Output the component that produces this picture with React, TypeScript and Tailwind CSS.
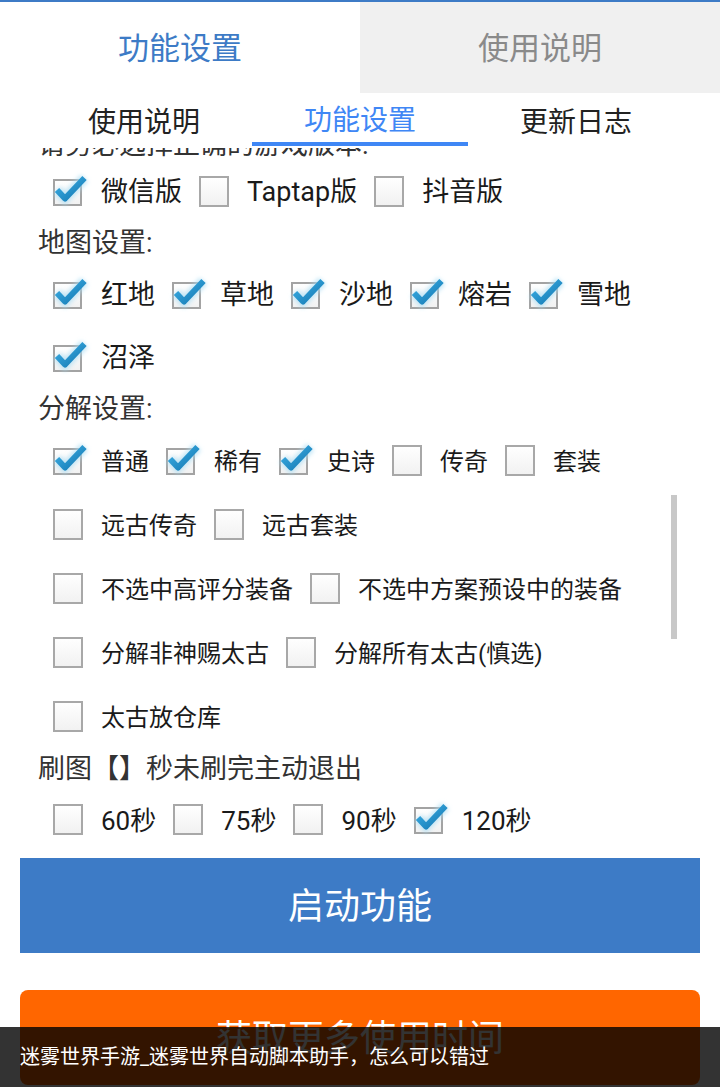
import React from "react";

const FONT = "Roboto, 'Noto Sans CJK SC', 'Noto Sans', sans-serif";

function Box({ checked }: { checked: boolean }) {
  return (
    <div className="w-[30px] h-[30px] shrink-0 relative">
      <svg width="30" height="30" viewBox="0 0 30 30" className="overflow-visible absolute left-0 top-0">
        <defs>
          <linearGradient id="bxg" x1="0" y1="0" x2="0" y2="1">
            <stop offset="0" stopColor="#ffffff" />
            <stop offset="1" stopColor="#f1f1f1" />
          </linearGradient>
          <linearGradient id="ckg" x1="0" y1="0" x2="1" y2="1">
            <stop offset="0" stopColor="#3db0e6" />
            <stop offset="1" stopColor="#1478b2" />
          </linearGradient>
          <filter id="glow" x="-50%" y="-50%" width="200%" height="200%">
            <feGaussianBlur stdDeviation="2" />
          </filter>
        </defs>
        {checked ? (
          <>
            <rect x="1" y="4" width="27" height="25" fill="url(#bxg)" stroke="#a3a3a3" strokeWidth="2" />
            <path d="M4 14 L12 22.5 L31.5 2" fill="none" stroke="#a9ddf3" strokeWidth="10" strokeOpacity="0.7" filter="url(#glow)" />
            <path d="M4 14 L12 22.5 L31.5 2" fill="none" stroke="url(#ckg)" strokeWidth="6" strokeLinejoin="round" />
          </>
        ) : (
          <rect x="1" y="1" width="28" height="29" fill="url(#bxg)" stroke="#a8a8a8" strokeWidth="2" />
        )}
      </svg>
    </div>
  );
}

function Opt({ label, checked, size }: { label: string; checked?: boolean; size: "lg" | "sm" | "md" }) {
  const cls = size === "lg" ? "text-[27px]" : size === "md" ? "text-[26px]" : "text-[24px]";
  return (
    <div className="flex items-center mr-[17px]">
      <Box checked={!!checked} />
      <span className={`ml-[18px] ${cls} text-[#1a1a1a] leading-none whitespace-nowrap pt-[3px]`}>{label}</span>
    </div>
  );
}

function Label({ children, className = "" }: { children: React.ReactNode; className?: string }) {
  return (
    <div className={`h-[40px] flex items-center pl-[38px] pt-[2px] text-[27px] text-[#333] leading-none whitespace-nowrap ${className}`}>
      {children}
    </div>
  );
}

function Row({ h, children, className = "" }: { h: string; children: React.ReactNode; className?: string }) {
  return <div className={`${h} flex items-center pl-[53px] ${className}`}>{children}</div>;
}

export default function App() {
  return (
    <div className="w-[720px] h-[1087px] relative overflow-hidden bg-white flex flex-col" style={{ fontFamily: FONT }}>
      <div className="h-[2px] bg-[#3d7bc6]" />
      <div className="flex h-[91px]">
        <div className="flex-1 flex items-center justify-center text-[31px] text-[#3d7bc6] pt-[4px]">功能设置</div>
        <div className="flex-1 flex items-center justify-center text-[31px] text-[#8a8a8a] bg-[#f0f0f0] pt-[4px]">使用说明</div>
      </div>
      <div className="flex h-[55px] px-[36px]">
        <div className="w-[216px] flex items-center justify-center text-[28px] text-[#222] pt-[4px]">使用说明</div>
        <div className="w-[216px] flex flex-col items-center">
          <div className="flex-1 flex items-center justify-center text-[28px] text-[#3f87f5] pt-[7px]">功能设置</div>
          <div className="h-[5px] w-full bg-[#3f87f5] mb-[2px]" />
        </div>
        <div className="w-[216px] flex items-center justify-center text-[28px] text-[#222] pt-[4px]">更新日志</div>
      </div>
      <div className="h-[702px] relative overflow-hidden">
        <Label className="mt-[-24px]">请务必选择正确的游戏版本:</Label>
        <Row h="h-[63px]" className="mt-[-5px]">
          <Opt label="微信版" checked size="lg" />
          <Opt label="Taptap版" size="lg" />
          <Opt label="抖音版" size="lg" />
        </Row>
        <Label>地图设置:</Label>
        <Row h="h-[63px]">
          <Opt label="红地" checked size="lg" />
          <Opt label="草地" checked size="lg" />
          <Opt label="沙地" checked size="lg" />
          <Opt label="熔岩" checked size="lg" />
          <Opt label="雪地" checked size="lg" />
        </Row>
        <Row h="h-[63px]">
          <Opt label="沼泽" checked size="lg" />
        </Row>
        <Label>分解设置:</Label>
        <Row h="h-[64px]">
          <Opt label="普通" checked size="sm" />
          <Opt label="稀有" checked size="sm" />
          <Opt label="史诗" checked size="sm" />
          <Opt label="传奇" size="sm" />
          <Opt label="套装" size="sm" />
        </Row>
        <Row h="h-[64px]">
          <Opt label="远古传奇" size="sm" />
          <Opt label="远古套装" size="sm" />
        </Row>
        <Row h="h-[64px]">
          <Opt label="不选中高评分装备" size="sm" />
          <Opt label="不选中方案预设中的装备" size="sm" />
        </Row>
        <Row h="h-[64px]">
          <Opt label="分解非神赐太古" size="sm" />
          <Opt label="分解所有太古(慎选)" size="sm" />
        </Row>
        <Row h="h-[64px]">
          <Opt label="太古放仓库" size="sm" />
        </Row>
        <Label>刷图【】秒未刷完主动退出</Label>
        <Row h="h-[62px]">
          <Opt label="60秒" size="md" />
          <Opt label="75秒" size="md" />
          <Opt label="90秒" size="md" />
          <Opt label="120秒" checked size="md" />
        </Row>
        <div className="absolute left-[671px] top-[347px] w-[6px] h-[144px] bg-[#c8c8c8]" />
      </div>
      <div className="px-[20px] pt-[8px] flex flex-col gap-[37px]">
        <div className="h-[95px] bg-[#3d7bc6] flex items-center justify-center text-[36px] text-white pt-[2px]">启动功能</div>
        <div className="h-[95px] bg-[#ff6600] rounded-[8px] flex items-center justify-center text-[36px] text-white pt-[2px]">获取更多使用时间</div>
      </div>
      <div className="absolute left-0 right-0 bottom-0 h-[60px] bg-black/80 flex items-center pl-[20px] text-[20px] text-white whitespace-nowrap">
        迷雾世界手游_迷雾世界自动脚本助手，怎么可以错过
      </div>
    </div>
  );
}
